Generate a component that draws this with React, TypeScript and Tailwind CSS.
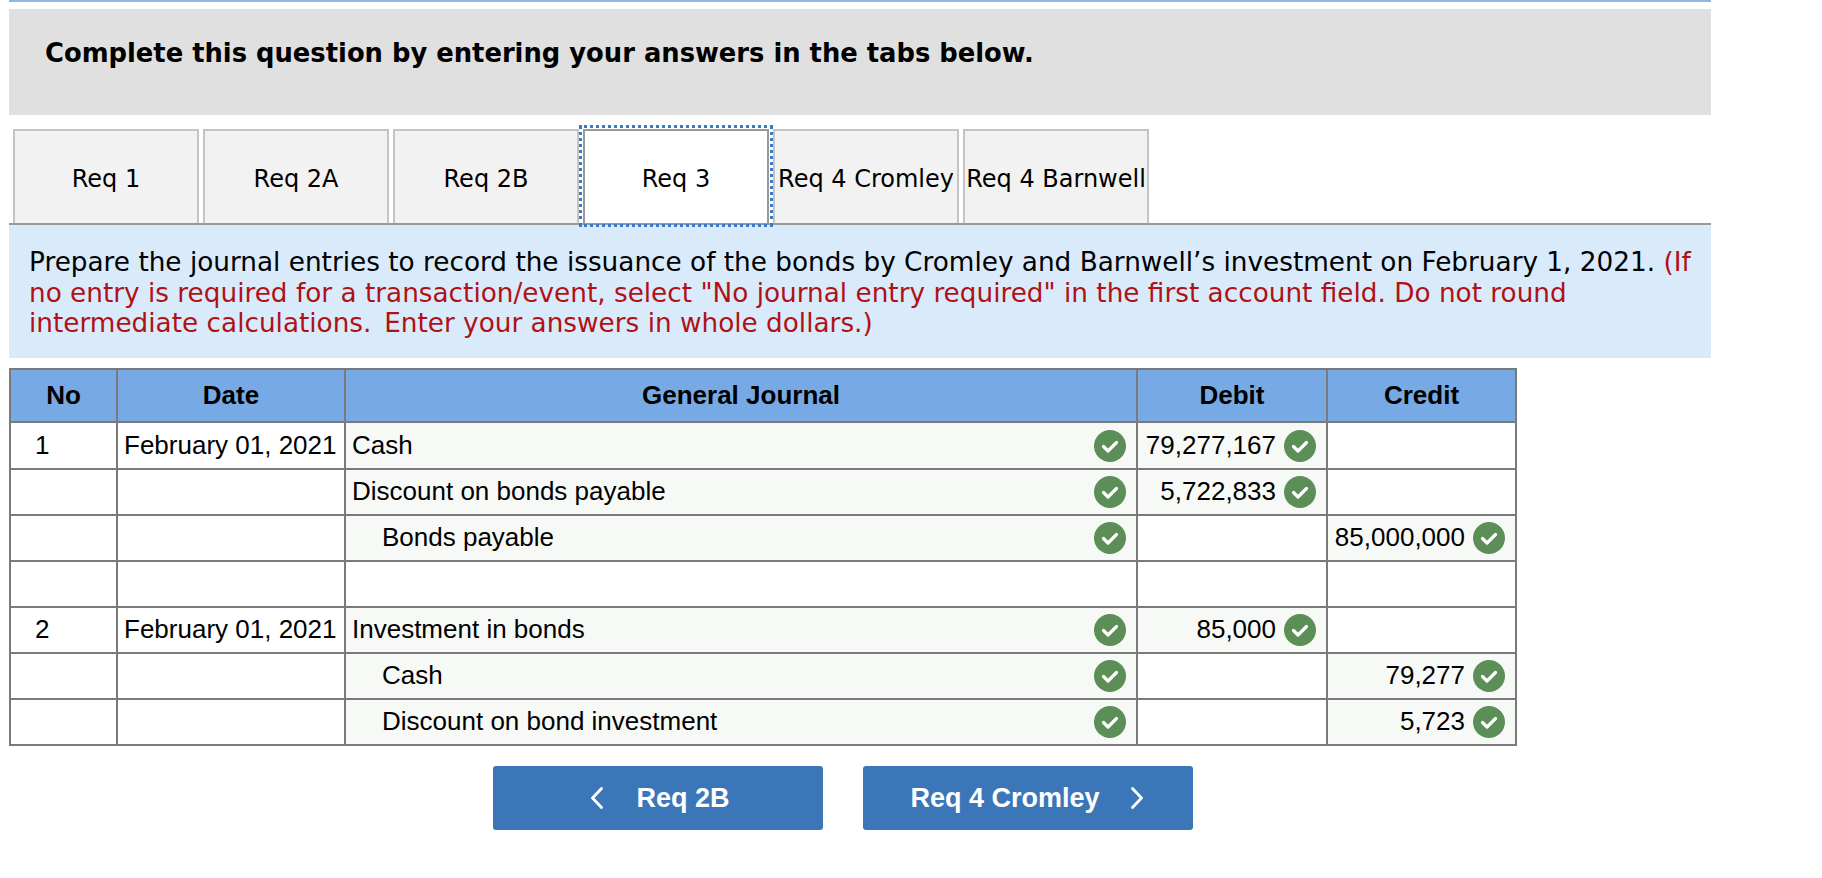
import React from "react";

const verdana = "font-['DejaVu_Sans',Verdana,sans-serif]";

const tabs = ["Req 1", "Req 2A", "Req 2B", "Req 3", "Req 4 Cromley", "Req 4 Barnwell"];

type Row = { no?: string; date?: string; account?: string; indent?: boolean; debit?: string; credit?: string; checked?: boolean };

const rows: Row[] = [
  { no: "1", date: "February 01, 2021", account: "Cash", debit: "79,277,167", checked: true },
  { account: "Discount on bonds payable", debit: "5,722,833", checked: true },
  { account: "Bonds payable", indent: true, credit: "85,000,000", checked: true },
  {},
  { no: "2", date: "February 01, 2021", account: "Investment in bonds", debit: "85,000", checked: true },
  { account: "Cash", indent: true, credit: "79,277", checked: true },
  { account: "Discount on bond investment", indent: true, credit: "5,723", checked: true },
];

function Check() {
  return (
    <svg width="32" height="32" viewBox="0 0 32 32" className="shrink-0">
      <circle cx="16" cy="16" r="16" fill="#5b8f57" />
      <path d="M9.5 16.5l4.5 4.5 8.5-8.5" fill="none" stroke="#fff" strokeWidth="3.2" strokeLinecap="round" strokeLinejoin="round" />
    </svg>
  );
}

function Amount({ value, lift }: { value?: string; lift: string }) {
  if (!value) return <td className="border-2 border-[#7a7a7a]" />;
  return (
    <td className="border-2 border-[#7a7a7a] bg-[#f7f9f6] pr-[10px]">
      <div className="flex items-center justify-end gap-[8px]">
        <span className={lift}>{value}</span>
        <Check />
      </div>
    </td>
  );
}

function Chevron({ right }: { right?: boolean }) {
  return (
    <svg width="14" height="22" viewBox="0 0 14 22" className="shrink-0">
      <path d={right ? "M2.5 1.5L11.5 11l-9 9.5" : "M11.5 1.5L2.5 11l9 9.5"} fill="none" stroke="#fff" strokeWidth="2.8" strokeLinecap="round" strokeLinejoin="round" />
    </svg>
  );
}

export default function App() {
  return (
    <div className="min-h-[878px] bg-white pl-[9px] w-[1711px] text-black">
      <div className="h-[2px] bg-[#90b9e0] mb-[7px]" />
      <div className={`h-[106px] bg-[#e0e0e0] pl-[36px] pt-[29px] text-[25.8px] leading-[30px] font-bold ${verdana}`}>
        Complete this question by entering your answers in the tabs below.
      </div>

      <div className={`mt-[14px] h-[96px] flex gap-[4px] pl-[4px] border-b-2 border-[#999] text-[24px] ${verdana}`}>
        {tabs.map((t) => (
          <div
            key={t}
            className={
              t === "Req 3"
                ? "w-[186px] pt-[4px] flex items-center justify-center border-2 border-[#999] border-b-0 bg-white outline-3 outline-dotted outline-[#3b7ac6] outline-offset-[1px] whitespace-nowrap"
                : "w-[186px] pt-[4px] flex items-center justify-center border-2 border-[#c4c4c4] border-b-0 bg-[#f2f2f2] whitespace-nowrap"
            }
          >
            {t}
          </div>
        ))}
      </div>

      <div className={`h-[133px] bg-[#d9ebfa] pl-[20px] pr-[16px] pt-[22px] text-[26.3px] leading-[30.5px] ${verdana}`}>
        Prepare the journal entries to record the issuance of the bonds by Cromley and Barnwell’s investment on February 1, 2021.{" "}
        <span className="text-[#b01116]">
          (If no entry is required for a transaction/event, select "No journal entry required" in the first account field. Do not round intermediate calculations.<span className="tracking-[-4px]">&nbsp;</span> Enter your answers in whole dollars.)
        </span>
      </div>

      <table className="mt-[10px] w-[1506px] table-fixed border-collapse text-[26px] font-['Liberation_Sans',Arial,sans-serif]">
        <colgroup>
          <col className="w-[107px]" />
          <col className="w-[228px]" />
          <col className="w-[792px]" />
          <col className="w-[190px]" />
          <col className="w-[189px]" />
        </colgroup>
        <thead>
          <tr className="h-[53px] bg-[#77aae5]">
            {["No", "Date", "General Journal", "Debit", "Credit"].map((h) => (
              <th key={h} className="border-2 border-[#7a7a7a] font-bold text-center">{h}</th>
            ))}
          </tr>
        </thead>
        <tbody>
          {rows.map((r, i) => {
            const lift = i > 0 ? "pb-[2px]" : "";
            return (
              <tr key={i} className={i === 0 ? "h-[47px]" : "h-[46px]"}>
                <td className={`border-2 border-[#7a7a7a] pl-[24px] ${lift}`}>{r.no}</td>
                <td className={`border-2 border-[#7a7a7a] pl-[6px] whitespace-nowrap ${lift}`}>{r.date}</td>
                <td className={r.account ? "border-2 border-[#7a7a7a] bg-[#f7f9f6] pr-[10px]" : "border-2 border-[#7a7a7a]"}>
                  {r.account && (
                    <div className={r.indent ? "flex items-center justify-between pl-[36px]" : "flex items-center justify-between pl-[6px]"}>
                      <span className={lift}>{r.account}</span>
                      {r.checked && <Check />}
                    </div>
                  )}
                </td>
                <Amount value={r.debit} lift={lift} />
                <Amount value={r.credit} lift={lift} />
              </tr>
            );
          })}
        </tbody>
      </table>

      <div className="mt-[20px] flex gap-[40px] pl-[484px] text-[27px] font-bold text-white font-['Liberation_Sans',Arial,sans-serif]">
        <div className="w-[330px] h-[64px] rounded-[3px] bg-[#3b76b9] pl-[4px] flex items-center justify-center gap-[32px]">
          <Chevron />
          <span>Req 2B</span>
        </div>
        <div className="w-[330px] h-[64px] rounded-[3px] bg-[#3b76b9] pr-[2px] flex items-center justify-center gap-[30px]">
          <span>Req 4 Cromley</span>
          <Chevron right />
        </div>
      </div>
    </div>
  );
}
